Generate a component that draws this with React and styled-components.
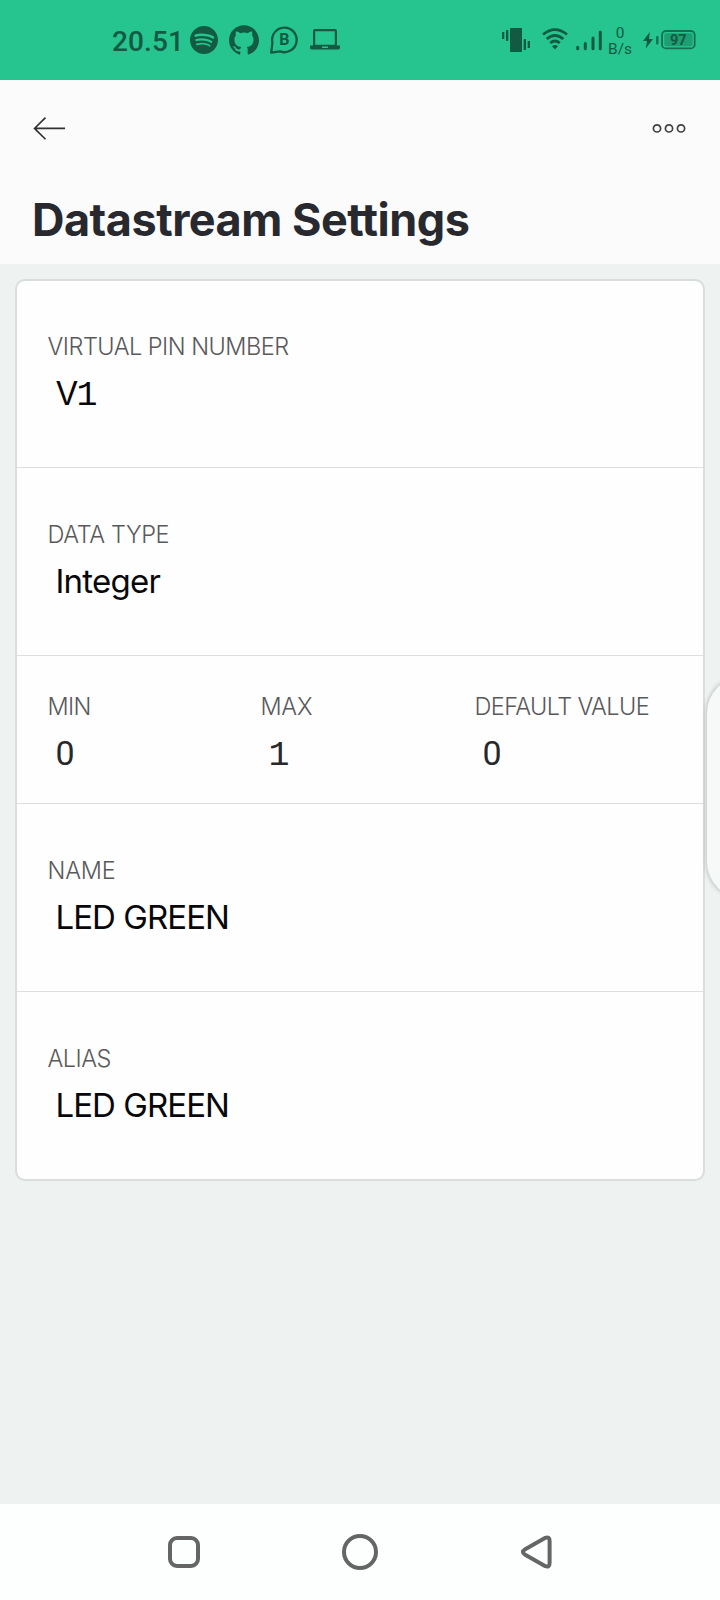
import React from 'react';
import styled, { createGlobalStyle } from 'styled-components';
import { SiSpotify, SiGithub } from 'react-icons/si';

const ink = '#125a42';

const GlobalStyle = createGlobalStyle`
  * { box-sizing: border-box; }
  body { margin: 0; background: #eef2f1; }
`;

const Screen = styled.div`
  position: relative;
  display: flex;
  flex-direction: column;
  width: 720px;
  height: 1600px;
  overflow: hidden;
  background: #eef2f1;
  font-family: Inter, "Liberation Sans", sans-serif;
`;

const StatusBar = styled.header`
  display: flex;
  justify-content: space-between;
  height: 80px;
  padding: 0 24px 0 112px;
  background: #26c58f;
  color: ${ink};
  font-family: Roboto, sans-serif;
`;

const StatusGroup = styled.div`
  display: flex;
  align-items: center;
  height: 80px;
  gap: ${(p) => p.$gap || 0}px;
  svg { display: block; flex: none; }
`;

const AppIcons = styled.div`
  display: flex;
  align-items: center;
  gap: 10.5px;
`;

const Clock = styled.time`
  width: 67px;
  font-size: 28px;
  font-weight: 500;
  line-height: 34px;
  letter-spacing: 0.1px;
  margin-top: 3px;
  white-space: nowrap;
`;

const Radios = styled.div`
  display: flex;
  gap: 12px;
  margin-right: 8px;
`;

const NetSpeed = styled.div`
  width: 24px;
  margin: 1px 11px 0 6px;
  font-size: 15.5px;
  line-height: 16px;
  text-align: center;
  white-space: nowrap;
`;

const Header = styled.section`
  height: 184px;
  padding: 32px 34px 0 32px;
  background: #fbfbfb;
`;

const Toolbar = styled.div`
  display: flex;
  justify-content: space-between;
  align-items: center;
  height: 32px;
`;

const IconButton = styled.button`
  display: flex;
  padding: 0;
  border: 0;
  background: none;
`;

const Title = styled.h1`
  margin: 49px 0 0;
  color: #28282f;
  font-size: 45px;
  font-weight: 700;
  line-height: 54px;
  letter-spacing: -0.5px;
  white-space: nowrap;
`;

const Card = styled.main`
  margin: 15px 15px 0;
  border: 2px solid #d9dddc;
  border-radius: 10px;
  background: #fefefe;
`;

const Row = styled.section`
  display: grid;
  grid-template-columns: ${(p) => (p.$columns ? '213px 214px 1fr' : '1fr')};
  height: ${(p) => (p.$columns ? 148 : 188)}px;
  padding: ${(p) => (p.$columns ? 36 : 52)}px 30.5px 0;
  border-bottom: 1px solid #dcdfde;
  &:first-child { height: 187px; padding-top: 51px; }
  &:last-child { height: 187px; border-bottom: 0; }
`;

const Label = styled.div`
  color: #59595b;
  font-size: 23.5px;
  font-weight: 320;
  line-height: 30px;
  letter-spacing: ${(p) => p.$spacing}px;
  white-space: nowrap;
`;

const Value = styled.div`
  margin: 10px 0 0 8px;
  height: 42px;
  color: ${(p) => (p.$soft ? '#28282b' : '#08080a')};
  font-size: 33px;
  font-weight: 390;
  line-height: 42px;
  letter-spacing: ${(p) => p.$spacing || 0}px;
  white-space: nowrap;
`;

const SlabDigit = styled.span`
  font-family: "Liberation Mono", monospace;
  font-size: 35px;
  line-height: 1;
`;

const OvalDigit = styled.span`
  font-family: Roboto, sans-serif;
  font-size: 34px;
  font-weight: 370;
  line-height: 1;
`;

const EdgeHandle = styled.div`
  position: absolute;
  left: 707px;
  top: 677px;
  width: 80px;
  height: 221px;
  border-radius: 36px;
  background: #f7f9f8;
  box-shadow: 0 0 4px 1px rgba(0, 0, 0, 0.2);
`;

const NavBar = styled.nav`
  display: flex;
  justify-content: space-between;
  align-items: center;
  height: 96px;
  margin-top: auto;
  padding: 0 166px;
  background: #fdfefe;
`;

const ChatBadge = () => (
  <svg width="30" height="30" viewBox="0 0 30 30" fill="none" stroke={ink}>
    <path d="M2.2 27.6 3.4 17.6A12.3 12.3 0 1 1 11 26.4Z" strokeWidth="2.3" strokeLinejoin="round" />
    <text x="15.4" y="20.2" textAnchor="middle" fontFamily="Roboto, sans-serif" fontSize="16" fontWeight="700" fill={ink} stroke="none">B</text>
  </svg>
);

const Laptop = () => (
  <svg width="30" height="24" viewBox="0 0 30 24">
    <path fill={ink} fillRule="evenodd" d="M5 1H25Q27 1 27 3V17.6H30V20Q30 21.6 28 21.6H2Q0 21.6 0 20V17.6H3V3Q3 1 5 1ZM5.2 3.2V16.8H24.8V3.2ZM12 18.5V20H18V18.5Z" />
  </svg>
);

const Vibrate = () => (
  <svg width="28" height="26" viewBox="0 0 28 26" fill={ink}>
    <path d="M8 1H20V25H8ZM0 5H2.3V12H0ZM4 3H6.3V14H4ZM21.7 12H24V23H21.7ZM25.7 14H28V21H25.7Z" />
  </svg>
);

const Wifi = () => (
  <svg width="26" height="24" viewBox="0 0 26 24" fill="none" stroke={ink} strokeWidth="2.7">
    <path d="M1 7.5Q13 -2.2 25 7.5M4.7 12Q13 5 21.3 12M8.2 16Q13 12 17.8 16" />
    <path d="M10 19.2Q13 16.8 16 19.2L13 22.6Z" fill={ink} stroke="none" />
  </svg>
);

const Signal = () => (
  <svg width="26" height="24" viewBox="0 0 26 24" stroke={ink} strokeWidth="3" strokeLinecap="round">
    <path d="M1.7 19.3V20.7M9.3 15.5V20.7M17 10V20.7M24.3 4V20.7" />
  </svg>
);

const Battery = () => (
  <svg width="53" height="24" viewBox="0 0 53 24">
    <path d="M6.8 4 0 13H4L2.8 20.5 10 11H6Z" fill={ink} />
    <rect x="13" y="8" width="2.6" height="8.5" rx="1" fill={ink} opacity=".75" />
    <rect x="19" y="3" width="32.7" height="17.4" rx="4" fill="none" stroke={ink} strokeOpacity=".8" strokeWidth="1.8" />
    <rect x="21.3" y="5.2" width="28.2" height="13" rx="2" fill="#1d9e73" />
    <text x="35.2" y="17" textAnchor="middle" fontFamily="Roboto, sans-serif" fontSize="14.5" fontWeight="700" fill={ink}>97</text>
  </svg>
);

const BackArrow = () => (
  <svg width="34" height="24" viewBox="0 0 34 24" fill="none" stroke="#303033" strokeWidth="1.6">
    <path d="M33 12.4H2.5M13.5 1.6 2.5 12.4 13.5 23.2" />
  </svg>
);

const More = () => (
  <svg width="34" height="12" viewBox="0 0 34 12" fill="none" stroke="#414145" strokeWidth="1.7">
    <circle cx="5" cy="6.4" r="3.6" />
    <circle cx="17" cy="6.4" r="3.6" />
    <circle cx="29" cy="6.4" r="3.6" />
  </svg>
);

const NavIcon = ({ children }) => (
  <svg width="36" height="36" viewBox="0 0 36 36" fill="none" stroke="#656565" strokeWidth="4">
    {children}
  </svg>
);

const Field = ({ label, value, labelSpacing, valueSpacing, soft }) => (
  <div>
    <Label $spacing={labelSpacing}>{label}</Label>
    <Value $spacing={valueSpacing} $soft={soft}>{value}</Value>
  </div>
);

export default function App() {
  return (
    <Screen>
      <GlobalStyle />
      <StatusBar>
        <StatusGroup $gap={11}>
          <Clock>20.51</Clock>
          <AppIcons>
            <SiSpotify size={28} />
            <SiGithub size={30} />
            <ChatBadge />
            <Laptop />
          </AppIcons>
        </StatusGroup>
        <StatusGroup>
          <Radios>
            <Vibrate />
            <Wifi />
          </Radios>
          <Signal />
          <NetSpeed>0<br />B/s</NetSpeed>
          <Battery />
        </StatusGroup>
      </StatusBar>
      <Header>
        <Toolbar>
          <IconButton aria-label="Back"><BackArrow /></IconButton>
          <IconButton aria-label="More"><More /></IconButton>
        </Toolbar>
        <Title>Datastream Settings</Title>
      </Header>
      <Card>
        <Row>
          <Field label="VIRTUAL PIN NUMBER" labelSpacing={-0.5} value={<>V<SlabDigit>1</SlabDigit></>} valueSpacing={-1.8} />
        </Row>
        <Row>
          <Field label="DATA TYPE" labelSpacing={-0.4} value="Integer" valueSpacing={-0.75} />
        </Row>
        <Row $columns>
          <Field label="MIN" labelSpacing={-0.7} value={<OvalDigit>0</OvalDigit>} soft />
          <Field label="MAX" labelSpacing={-0.3} value={<SlabDigit>1</SlabDigit>} soft />
          <Field label="DEFAULT VALUE" labelSpacing={-0.6} value={<OvalDigit>0</OvalDigit>} soft />
        </Row>
        <Row>
          <Field label="NAME" labelSpacing={-0.2} value="LED GREEN" valueSpacing={-0.95} />
        </Row>
        <Row>
          <Field label="ALIAS" labelSpacing={-0.5} value="LED GREEN" valueSpacing={-0.95} />
        </Row>
      </Card>
      <EdgeHandle />
      <NavBar>
        <NavIcon><rect x="4" y="4" width="28" height="28" rx="7" /></NavIcon>
        <NavIcon><circle cx="18" cy="18" r="16" /></NavIcon>
        <NavIcon><path d="M27.4 3.8 7.2 15.2Q2.6 18 7.2 20.8L27.4 32.2Q31.6 33.5 31.6 29V7Q31.6 2.5 27.4 3.8Z" strokeLinejoin="round" /></NavIcon>
      </NavBar>
    </Screen>
  );
}
